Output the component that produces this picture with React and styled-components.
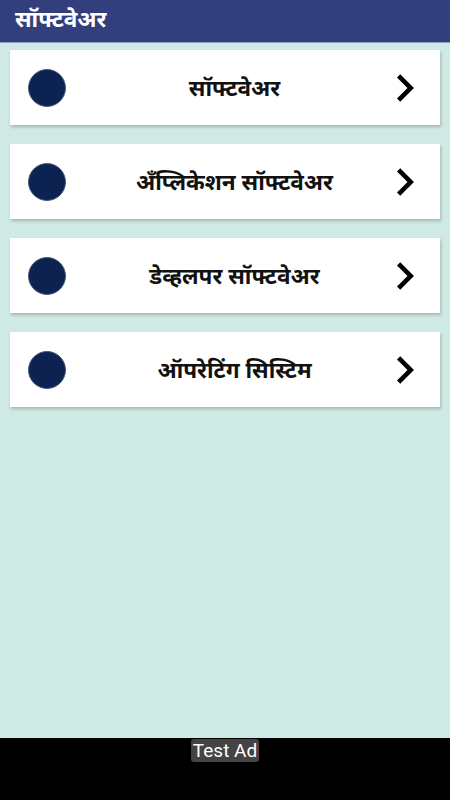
import React from 'react';
import styled, { createGlobalStyle } from 'styled-components';

const GlobalStyle = createGlobalStyle`
  html, body {
    margin: 0;
    padding: 0;
    height: 100%;
  }
  body {
    font-family: "Noto Sans Devanagari", "Noto Sans", Roboto, sans-serif;
    background: #cfe9e4;
  }
  #root {
    height: 100%;
  }
`;

const Screen = styled.div`
  width: 450px;
  height: 800px;
  display: flex;
  flex-direction: column;
  background: #cfe9e4;
`;

const TopBar = styled.header`
  height: 43px;
  background: #323f7c;
  border-bottom: 1px solid #8e9bc0;
  display: flex;
  align-items: center;
  padding: 2px 15px 0;
  box-sizing: border-box;
`;

const Title = styled.h1`
  margin: 0;
  color: #fff;
  font-size: 22.5px;
  font-weight: 700;
  line-height: 1;
`;

const List = styled.ul`
  list-style: none;
  margin: 0;
  padding: 7px 10px 0;
  display: flex;
  flex-direction: column;
  gap: 19px;
  flex: 1;
`;

const Card = styled.li`
  height: 75px;
  background: #fff;
  box-shadow: 1px 2px 3px rgba(0, 0, 0, 0.22);
  display: flex;
  align-items: center;
  padding: 0 26px 0 18px;
`;

const Dot = styled.span`
  width: 38px;
  height: 38px;
  border-radius: 50%;
  background: #0c2351;
  border: 1px solid #4b5a7c;
  box-sizing: border-box;
  flex-shrink: 0;
`;

const Label = styled.span`
  flex: 1;
  text-align: center;
  font-size: 22.5px;
  font-weight: 700;
  color: #111;
  padding: 5px 0 0 6px;
`;

const Chevron = styled.svg`
  width: 17px;
  height: 28px;
  flex-shrink: 0;
`;

const AdBar = styled.div`
  height: 62px;
  background: #000;
  display: flex;
  justify-content: center;
  align-items: flex-start;
  padding-top: 1px;
  box-sizing: border-box;
`;

const AdTag = styled.span`
  font-family: Roboto, "Liberation Sans", sans-serif;
  font-size: 19px;
  color: #fff;
  background: #444;
  border-radius: 3px;
  padding: 0 2px;
  line-height: 23px;
`;

const items = [
  'सॉफ्टवेअर',
  'अँप्लिकेशन सॉफ्टवेअर',
  'डेव्हलपर सॉफ्टवेअर',
  'ऑपरेटिंग सिस्टिम',
];

export default function App() {
  return (
    <Screen>
      <GlobalStyle />
      <TopBar>
        <Title>सॉफ्टवेअर</Title>
      </TopBar>
      <List>
        {items.map((text) => (
          <Card key={text}>
            <Dot />
            <Label>{text}</Label>
            <Chevron viewBox="8.59 6 7.41 12">
              <path d="M10 6L8.59 7.41 13.17 12l-4.58 4.59L10 18l6-6z" fill="#000" />
            </Chevron>
          </Card>
        ))}
      </List>
      <AdBar>
        <AdTag>Test Ad</AdTag>
      </AdBar>
    </Screen>
  );
}
